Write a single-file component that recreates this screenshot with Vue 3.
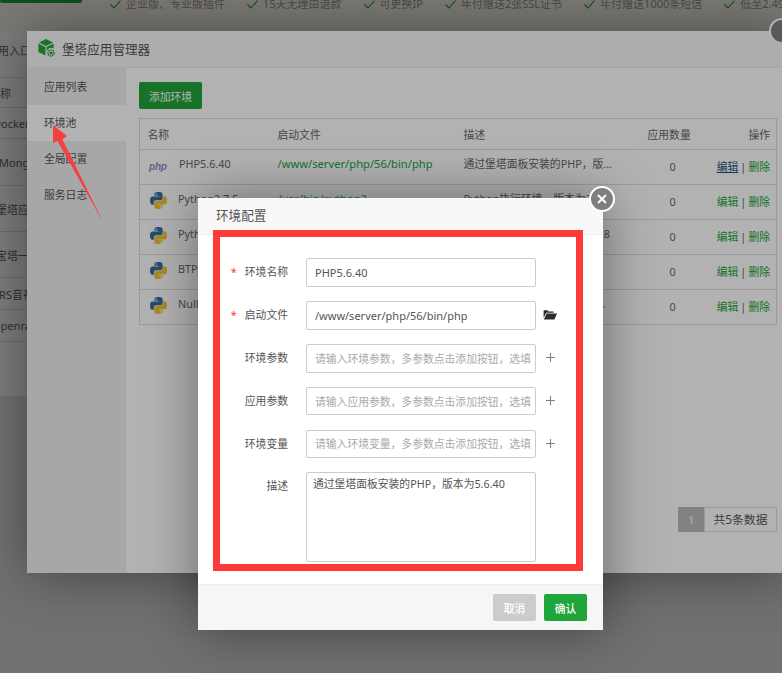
<script setup>
const features = [
  "企业版、专业版插件",
  "15天无理由退款",
  "可更换IP",
  "年付赠送2张SSL证书",
  "年付赠送1000条短信",
  "低至2.49元/天起",
];

const pageRows = [
  { h: 40, text: "应用入口", shift: -13, plain: true },
  { h: 8, text: "" },
  { h: 30, text: "名称", shift: -11 },
  { h: 31, text: "Docker", shift: -7 },
  { h: 47, text: "MongoDB", shift: -1 },
  { h: 46, text: "堡塔应用", shift: -4 },
  { h: 46, text: "宝塔一键", shift: -4 },
  { h: 32, text: "SRS音视频", shift: -7 },
  { h: 32, text: "openrasp", shift: -6 },
];

const tabs = ["应用列表", "环境池", "全局配置", "服务日志"];

const envs = [
  { name: "PHP5.6.40", type: "php", path: "/www/server/php/56/bin/php", desc: "通过堡塔面板安装的PHP，版...", hover: true },
  { name: "Python2.7.5", type: "py", path: "/usr/bin/python2", desc: "Python执行环境，版本为2.7.5" },
  { name: "Python3.6.8", type: "py", path: "/usr/bin/python3", desc: "Python执行环境，版本为3.6.8" },
  { name: "BTPython3.7.9", type: "py", path: "/www/server/panel/pyenv/bin", desc: "堡塔面板内置Python环境" },
  { name: "NullPython", type: "py", path: "/usr/bin/null", desc: "不使用Python环境运行应用..." },
];

const pyBlue =
  "M54.9 0C26.8 0 28.6 12.2 28.6 12.2v12.6h26.8v3.8H17.9S0 26.6 0 54.9c0 28.3 15.6 27.3 15.6 27.3h9.3V69s-.5-15.6 15.4-15.6h26.5s14.9.2 14.9-14.4V14.8S84.1 0 54.9 0zM40.1 8.5a4.8 4.8 0 1 1 0 9.6 4.8 4.8 0 0 1 0-9.6z";

const params = [
  { label: "环境参数", placeholder: "请输入环境参数，多参数点击添加按钮，选填" },
  { label: "应用参数", placeholder: "请输入应用参数，多参数点击添加按钮，选填" },
  { label: "环境变量", placeholder: "请输入环境变量，多参数点击添加按钮，选填" },
];
</script>

<template>
  <div class="root">
    <div class="page">
      <div class="strip">
        <div class="buy"></div>
        <div v-for="f in features" :key="f" class="feature">
          <svg width="11" height="9" viewBox="0 0 11 9"><path d="M.5 4.5 4 8 10.5.7" fill="none" stroke="#20a53a" stroke-width="1.1" /></svg>
          <span>{{ f }}</span>
        </div>
      </div>
      <div class="page-list">
        <div
          v-for="(r, i) in pageRows"
          :key="i"
          class="page-row"
          :class="{ plain: r.plain }"
          :style="{ height: r.h + 'px' }"
        >
          <span :style="{ marginLeft: r.shift + 'px' }">{{ r.text }}</span>
        </div>
      </div>
    </div>

    <div class="shade"></div>

    <div class="window">
      <div class="win-head">
        <svg class="win-logo" width="18" height="19" viewBox="0 0 18 19">
          <path d="M8 0 15 3.4 8 6.9 1 3.4z" fill="#20a53a" />
          <path d="M.4 4.6 7.4 8v8.6L.4 13z" fill="#20a53a" />
          <path d="M8.6 8l7-3.4v5.2a4.4 4.4 0 0 0-7 4.2z" fill="#20a53a" />
          <circle cx="13" cy="14" r="3" fill="none" stroke="#20a53a" stroke-width="1.6" stroke-dasharray="1.4 .8" />
          <circle cx="13" cy="14" r="1.6" fill="#20a53a" />
        </svg>
        <span>堡塔应用管理器</span>
      </div>
      <div class="win-body">
        <div class="side">
          <div v-for="t in tabs" :key="t" class="tab" :class="{ on: t === '环境池' }">{{ t }}</div>
        </div>
        <div class="main">
          <button class="add">添加环境</button>
          <table class="env-table">
            <colgroup>
              <col style="width: 130px" />
              <col style="width: 186px" />
              <col style="width: 184px" />
              <col style="width: 61px" />
              <col />
            </colgroup>
            <thead>
              <tr>
                <th>名称</th>
                <th>启动文件</th>
                <th>描述</th>
                <th>应用数量</th>
                <th class="right">操作</th>
              </tr>
            </thead>
            <tbody>
              <tr v-for="e in envs" :key="e.name">
                <td>
                  <div class="env-name">
                    <span v-if="e.type === 'php'" class="php-logo">php</span>
                    <svg v-else class="py-logo" width="17" height="17" viewBox="0 0 110 110">
                      <path :d="pyBlue" fill="#366f9f" />
                      <path :d="pyBlue" fill="#f2c530" transform="rotate(180 55 55)" />
                    </svg>
                    <span class="lift">{{ e.name }}</span>
                  </div>
                </td>
                <td class="path"><span class="lift">{{ e.path }}</span></td>
                <td><span class="lift">{{ e.desc }}</span></td>
                <td class="num">0</td>
                <td class="right ops">
                  <a class="link" :class="{ hover: e.hover }">编辑</a> | <a class="link">删除</a>
                </td>
              </tr>
            </tbody>
          </table>
          <div class="pager">
            <span class="cur">1</span>
            <span class="total">共5条数据</span>
          </div>
        </div>
      </div>
      <div class="win-close"></div>
    </div>

    <div class="shade"></div>

    <div class="modal">
      <div class="modal-head">环境配置</div>
      <div class="form">
        <div class="row">
          <label class="label"><i>*</i>环境名称</label>
          <input class="input" value="PHP5.6.40" />
        </div>
        <div class="row">
          <label class="label"><i>*</i>启动文件</label>
          <input class="input" value="/www/server/php/56/bin/php" />
          <svg class="row-icon folder" width="14" height="11" viewBox="0 0 14 11">
            <path d="M1 1.2h3.6l1 1.2h4.9v1.4H3.2L.6 9V1.6z" fill="#2b2b2b" />
            <path d="M3.7 4.6H14l-2.6 6H.9z" fill="#2b2b2b" />
          </svg>
        </div>
        <div v-for="p in params" :key="p.label" class="row">
          <label class="label">{{ p.label }}</label>
          <input class="input" :placeholder="p.placeholder" />
          <svg class="row-icon" width="11" height="11" viewBox="0 0 11 11">
            <path d="M5.5 1v9M1 5.5h9" stroke="#808080" stroke-width="1.1" />
          </svg>
        </div>
        <div class="row">
          <label class="label">描述</label>
          <textarea class="area" value="通过堡塔面板安装的PHP，版本为5.6.40"></textarea>
        </div>
      </div>
      <div class="modal-foot">
        <button class="btn cancel">取消</button>
        <button class="btn ok">确认</button>
      </div>
      <div class="modal-close">
        <svg width="10" height="10" viewBox="0 0 10 10">
          <path d="M1 1l8 8M9 1l-8 8" stroke="#fff" stroke-width="2" />
        </svg>
      </div>
    </div>

    <div class="mark-box"></div>
    <svg class="mark-arrow" width="60" height="105" viewBox="50 122 60 105">
      <path d="M53 125 67 136 62.500 139.500 103 222 57.500 141 53 143z" fill="#f64040" />
    </svg>
  </div>
</template>

<style scoped>
.root {
  position: relative;
  width: 782px;
  height: 673px;
  overflow: hidden;
  background: #e8e8e8;
  font-family: "Noto Sans", "Noto Sans CJK SC", sans-serif;
  font-size: 10.8px;
  color: #666;
}

.page {
  height: 396px;
  background: #fff;
}

.strip {
  display: flex;
  height: 30px;
  color: #999;
  background: #fffbef;
  font-size: 11px;
  line-height: 8px;
  white-space: nowrap;
}

.buy {
  flex: none;
  width: 82px;
  height: 3px;
  margin-right: 28px;
  background: #20a53a;
  border-radius: 0 0 2px 2px;
}

.feature {
  flex: none;
  display: flex;
  align-items: flex-start;
  gap: 5px;
  margin-right: 22px;
}

.page-row {
  display: flex;
  align-items: center;
  border-bottom: 1px solid #ddd;
  box-sizing: border-box;
  color: #666;
  font-size: 11px;
  white-space: nowrap;
}

.page-row.plain {
  border-bottom: 0;
}

.shade {
  position: absolute;
  inset: 0;
  background: rgba(0, 0, 0, 0.3);
}

.window {
  position: absolute;
  left: 27px;
  top: 31px;
  width: 763px;
  height: 542px;
  display: flex;
  flex-direction: column;
  background: #fff;
  box-shadow: 1px 1px 50px rgba(0, 0, 0, 0.42);
}

.win-head {
  flex: none;
  display: flex;
  align-items: center;
  gap: 6px;
  height: 37px;
  padding: 0 0 2px 11px;
  background: #f8f8f8;
  border-bottom: 1px solid #eee;
  box-sizing: border-box;
  font-size: 12.6px;
  color: #555;
}

.win-logo {
  flex: none;
}

.win-body {
  flex: 1;
  display: flex;
  min-height: 0;
}

.side {
  flex: none;
  width: 99px;
  padding-top: 1px;
  background: #f0f0f0;
}

.tab {
  height: 36px;
  padding-left: 17px;
  line-height: 36px;
  color: #555;
}

.tab.on {
  background: #fff;
}

.main {
  flex: 1;
  position: relative;
  padding: 14px 13px 0;
}

.add {
  display: block;
  width: 63px;
  height: 27px;
  padding: 0;
  border: 0;
  border-radius: 2px;
  background: #20a53a;
  color: #fff;
  font: inherit;
}

.env-table {
  width: 638px;
  margin-top: 9px;
  border: 1px solid #ddd;
  border-collapse: collapse;
  table-layout: fixed;
}

.env-table th {
  height: 31px;
  padding: 0 0 0 8px;
  box-sizing: border-box;
  font-weight: 400;
  text-align: left;
  color: #666;
  white-space: nowrap;
}

.env-table th:first-child {
  padding-left: 7.500px;
}

.env-table td {
  height: 35px;
  padding: 0 0 0 8px;
  box-sizing: border-box;
  border-top: 1px solid #ddd;
  line-height: 14px;
  white-space: nowrap;
  overflow: hidden;
}

.env-table .right {
  padding-right: 6px;
  text-align: right;
}

.env-table .ops {
  word-spacing: -0.7px;
}

.env-table .num {
  padding-left: 30px;
}

.env-name {
  display: flex;
  align-items: center;
  gap: 11px;
}

.lift {
  display: inline-block;
  position: relative;
  top: -3px;
}

.path .lift {
  font-size: 11.2px;
}

.php-logo {
  flex: none;
  width: 19px;
  margin-left: 1px;
  color: #8892be;
  font-family: "Liberation Sans", sans-serif;
  font-size: 10px;
  font-style: italic;
  font-weight: 700;
  letter-spacing: -0.2px;
}

.py-logo {
  flex: none;
  margin: 0 0 0 2px;
  position: relative;
  top: -2px;
}

.path,
.link {
  color: #20a53a;
}

.link.hover {
  color: #23527c;
  text-decoration: underline;
}

.pager {
  position: absolute;
  top: 439px;
  right: 13px;
  display: flex;
  height: 25px;
  line-height: 23px;
}

.cur {
  width: 26px;
  background: #bbb;
  color: #eee;
  text-align: center;
  line-height: 25px;
  font-weight: 600;
}

.total {
  width: 73px;
  border: 1px solid #ddd;
  box-sizing: border-box;
  color: #555;
  font-size: 11.800px;
  text-align: center;
}

.win-close {
  position: absolute;
  right: -5px;
  top: -13px;
  width: 26px;
  height: 26px;
  border: 2px solid #fff;
  box-sizing: border-box;
  border-radius: 50%;
  background: #808080;
}

.modal {
  position: absolute;
  left: 198px;
  top: 198px;
  width: 405px;
  height: 432px;
  display: flex;
  flex-direction: column;
  background: #fff;
  box-shadow: 1px 1px 50px rgba(0, 0, 0, 0.42);
}

.modal-head {
  flex: none;
  height: 37px;
  padding-left: 18px;
  background: #f8f8f8;
  border-bottom: 1px solid #eee;
  box-sizing: border-box;
  color: #555;
  font-size: 12.6px;
  line-height: 36px;
}

.form {
  flex: 1;
  display: flex;
  flex-direction: column;
  gap: 14.100px;
  padding-top: 23px;
}

.row {
  display: flex;
  align-items: flex-start;
}

.label {
  flex: none;
  width: 90px;
  margin-right: 18px;
  color: #555;
  line-height: 27.500px;
  text-align: right;
}

.label i {
  margin-right: 8px;
  color: #f33;
  font-style: normal;
}

.input,
.area {
  flex: none;
  width: 230px;
  margin: 0;
  border: 1px solid #ccc;
  border-radius: 2px;
  box-sizing: border-box;
  outline: 0;
  color: #555;
  font: inherit;
  background: #fff;
}

.input {
  height: 28.800px;
  padding: 0 4px 0 8px;
  font-size: 11px;
}

.input::placeholder {
  color: #aaa;
  opacity: 1;
  font-size: 10.8px;
}

.area {
  height: 90px;
  padding: 2px 6px;
  line-height: 18px;
  resize: none;
}

.row-icon {
  flex: none;
  margin: 8px 0 0 8.500px;
}

.row-icon.folder {
  margin-left: 7px;
  margin-top: 8.500px;
}

.modal-foot {
  flex: none;
  display: flex;
  justify-content: flex-end;
  align-items: center;
  gap: 8px;
  height: 46px;
  padding-right: 16px;
  background: #f5f7f6;
  border-top: 1px solid #eee;
  box-sizing: border-box;
}

.btn {
  width: 43px;
  height: 27px;
  padding: 0;
  border: 0;
  border-radius: 2px;
  color: #fff;
  font: inherit;
  font-weight: 500;
}

.cancel {
  background: #ccc;
}

.ok {
  background: #20a53a;
}

.modal-close {
  position: absolute;
  right: -12px;
  top: -12px;
  display: flex;
  align-items: center;
  justify-content: center;
  width: 26px;
  height: 26px;
  border: 2px solid #fff;
  box-sizing: border-box;
  border-radius: 50%;
  background: #7f7f7f;
}

.mark-box {
  position: absolute;
  left: 213px;
  top: 230px;
  width: 370px;
  height: 341px;
  border: 7px solid #ff3838;
  box-sizing: border-box;
}

.mark-arrow {
  position: absolute;
  left: 50px;
  top: 122px;
}
</style>
